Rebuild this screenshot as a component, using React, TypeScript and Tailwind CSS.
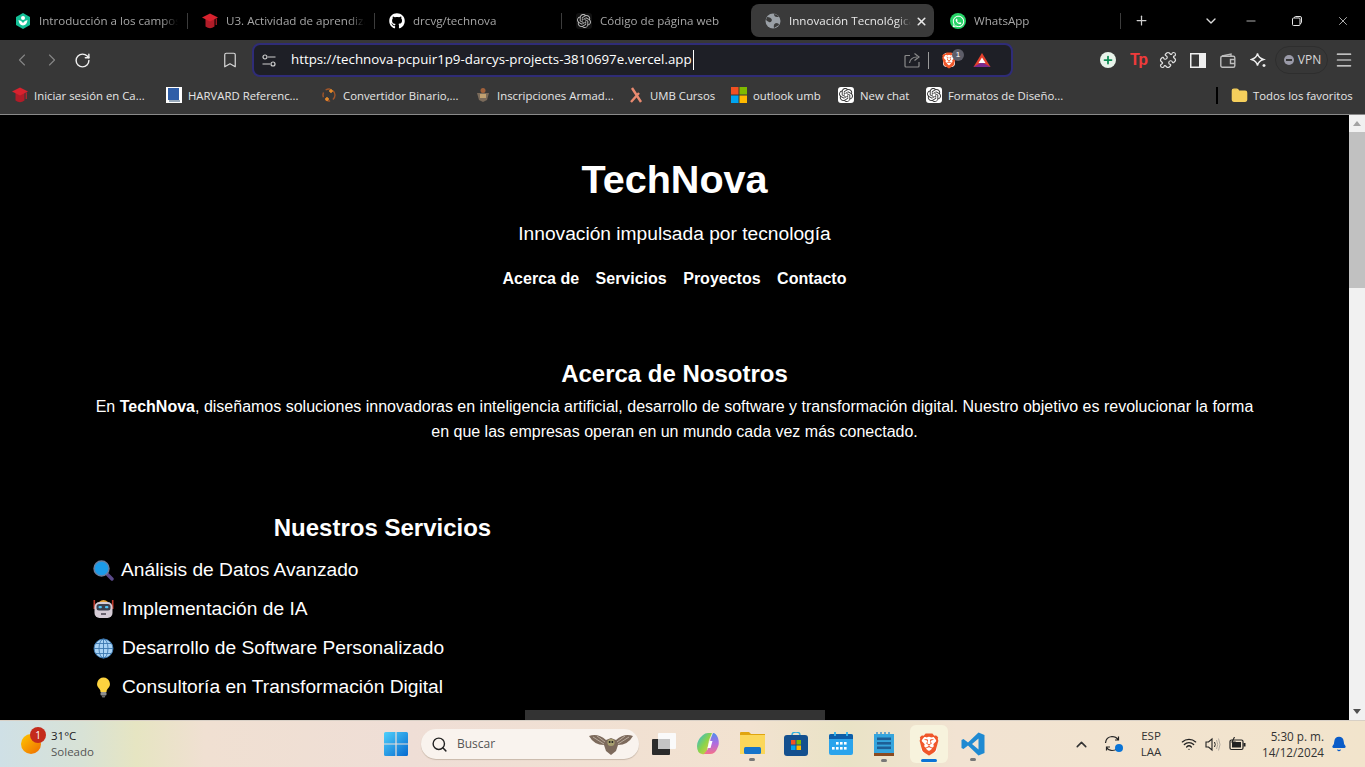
import React from "react";
import { FaGithub, FaWhatsapp } from "react-icons/fa";
import { SiOpenai, SiBrave } from "react-icons/si";
import { ChevronLeft, ChevronRight, RotateCw, Bookmark, X, Plus, ChevronDown, Minus, Puzzle, Search, ChevronUp, Wifi, Bell, Folder, Menu } from "lucide-react";

const Cap = ({ s = 16 }: { s?: number }) => (
  <svg width={s} height={s} viewBox="0 0 16 16"><path d="M3.5 6 H12.5 V13.5 Q8 17 3.5 13.5Z" fill="#b01c28" /><path d="M0 4.5 L8 0.5 L16 4.5 L8 8.5Z" fill="#d8222e" /><path d="M14.2 5.5 V12" stroke="#d8222e" strokeWidth="1" /></svg>
);
const Gpt = ({ box = false }: { box?: boolean }) => (
  <span className={box ? "flex h-4 w-4 items-center justify-center rounded-[3px] bg-white text-[#333]" : "flex h-4 w-4 items-center justify-center rounded-[3px] bg-[#111] text-[#bbb]"}>
    <SiOpenai size={14} />
  </span>
);
const Khan = () => (
  <svg width="16" height="16" viewBox="0 0 16 16"><path d="M8 0 L15 4 V12 L8 16 L1 12 V4Z" fill="#14bf96" /><circle cx="8" cy="5" r="2" fill="#fff" /><path d="M3.5 7 Q4 12 8 12.5 Q12 12 12.5 7 Q9.5 7.5 8 10 Q6.5 7.5 3.5 7Z" fill="#fff" /></svg>
);
const Globe = () => (
  <svg width="16" height="16" viewBox="0 0 16 16"><circle cx="8" cy="8" r="7.5" fill="#9aa0a6" /><path d="M2 4 Q6 4 7 7 Q6 10 4 9 Q2 8 1 7Z M9 15 Q8 11 11 10 Q14 10 14 12Z M9 1 Q9 4 12 4 L14 4 Q12 1 9 1Z" fill="#3b3b3b" /></svg>
);
const BraveMark = ({ w, h }: { w: number; h: number }) => (
  <span className="relative flex items-center justify-center" style={{ width: w, height: h }}>
    <span className="absolute left-[15%] right-[15%] top-[15%] bottom-[15%] rounded-sm bg-white" />
    <SiBrave size={h} color="#f0572a" className="relative" />
  </span>
);
const Tab = ({ icon, label, active, sep = true, w = "w-[187px]" }: { icon: React.ReactNode; label: string; active?: boolean; sep?: boolean; w?: string }) => (
  <div className={`flex h-[33px] shrink-0 items-center pt-[1px] ${w} ${active ? "rounded-lg bg-[#3a3a3a] text-[#e8e8e8]" : "text-[#a6a6a6]"}`}>
    <span className="ml-[14px] mr-2 flex w-4 shrink-0 justify-center">{icon}</span>
    <span className="min-w-0 flex-1 overflow-hidden whitespace-nowrap text-[11.6px] [mask-image:linear-gradient(to_right,black_88%,transparent)]">{label}</span>
    {active && <X size={13} strokeWidth={3} className="ml-1 mr-[6px] shrink-0 text-[#e8e8e8]" />}
    {!active && <span className="ml-[9px] h-4 w-px shrink-0" style={{ background: sep ? "#3c3c3c" : "transparent" }} />}
  </div>
);
const Mark = ({ icon, label, w }: { icon: React.ReactNode; label: string; w: string }) => (
  <div className={`flex shrink-0 items-center gap-[6px] ${w}`}>
    <span className="flex w-4 shrink-0 justify-center">{icon}</span>
    <span className="whitespace-nowrap">{label}</span>
  </div>
);
const Lens = () => (
  <svg width="21" height="21" viewBox="0 0 21 21" className="-mr-px"><path d="M13 13 L19 19" stroke="#5b4a8a" strokeWidth="3.4" strokeLinecap="round" /><circle cx="8.5" cy="8.5" r="7.5" fill="#1c9be8" stroke="#6d7f9e" strokeWidth="1.4" /></svg>
);
const Robot = () => (
  <svg width="21" height="21" viewBox="0 0 21 21"><rect x="0.5" y="1" width="1.6" height="9" fill="#c0392b" /><rect x="18.9" y="1" width="1.6" height="9" fill="#c0392b" /><path d="M6 3 Q10.5 -1 15 3Z" fill="#e3a33a" /><rect x="1.5" y="3" width="18" height="16" rx="5" fill="#d5ccd6" /><rect x="3.5" y="5" width="14" height="6.5" rx="2.5" fill="#3a3f4c" /><rect x="5.5" y="7" width="3.4" height="2.2" rx="1" fill="#4fc3f7" /><rect x="12" y="7" width="3.4" height="2.2" rx="1" fill="#4fc3f7" /><rect x="8" y="14" width="5" height="2" fill="#6a6470" /></svg>
);
const Earth = () => (
  <svg width="21" height="21" viewBox="0 0 21 21" fill="none"><circle cx="10.5" cy="10.5" r="9.5" fill="#a9d3f5" /><g stroke="#3c78b0" strokeWidth="0.9"><circle cx="10.5" cy="10.5" r="9.5" /><ellipse cx="10.5" cy="10.5" rx="4.5" ry="9.5" /><path d="M10.5 1V20M1 10.5H20M2.5 5.5H18.5M2.5 15.5H18.5" /></g></svg>
);
const Bulb = () => (
  <svg width="21" height="21" viewBox="0 0 21 21"><path d="M10.5 0.5 A6.5 6.5 0 0 1 14.5 12 Q13.5 13 13.5 15 H7.5 Q7.5 13 6.5 12 A6.5 6.5 0 0 1 10.5 0.5Z" fill="#fdd33f" /><rect x="7.5" y="15" width="6" height="3.5" rx="1" fill="#8f8f8f" /><rect x="8.8" y="18.5" width="3.4" height="2" rx="1" fill="#6b6b6b" /></svg>
);
const Service = ({ icon, label }: { icon: React.ReactNode; label: string }) => (
  <li className="flex h-[39px] items-center gap-2 last:h-[38px]">{icon}<span>{label}</span></li>
);
const Win = () => (
  <svg width="24" height="24" viewBox="0 0 24 24"><defs><linearGradient id="w" x1="0" y1="0" x2="1" y2="1"><stop offset="0" stopColor="#4fd0fb" /><stop offset="1" stopColor="#0669cf" /></linearGradient></defs><path d="M0 1.5 Q0 0 1.5 0 H11.4 V11.4 H0Z M12.6 0 H22.5 Q24 0 24 1.5 V11.4 H12.6Z M0 12.6 H11.4 V24 H1.5 Q0 24 0 22.5Z M12.6 12.6 H24 V22.5 Q24 24 22.5 24 H12.6Z" fill="url(#w)" /></svg>
);
const Dot = () => <span className="absolute bottom-[-5px] left-[9px] h-[3px] w-[6px] rounded-sm bg-[#777]" />;

export default function App() {
  return (
    <div className="relative flex h-screen w-full flex-col overflow-hidden bg-black font-['Liberation_Sans',sans-serif] text-white">
      {/* tab strip */}
      <div className="flex h-10 shrink-0 items-center bg-black pl-[1px] pt-[1px] font-['Open_Sans',sans-serif] text-[11.7px]">
        <Tab icon={<Khan />} label="Introducción a los campos" />
        <Tab icon={<Cap />} label="U3. Actividad de aprendizaje" />
        <Tab icon={<FaGithub size={16} className="text-white" />} label="drcvg/technova" />
        <Tab icon={<Gpt />} label="Código de página web" sep={false} w="w-[188px] mr-[1px]" />
        <Tab icon={<Globe />} label="Innovación Tecnológica" active w="w-[183px] mr-[2px]" />
        <Tab icon={<span className="flex h-4 w-4 items-center justify-center rounded-full bg-[#25d366] text-white"><FaWhatsapp size={13} /></span>} label="WhatsApp" w="w-[185px]" />
        <Plus size={15} className="ml-[13px] text-[#cfcfcf]" />
        <ChevronDown size={16} className="ml-[54px] text-[#dcdcdc]" />
        <Minus size={14} strokeWidth={1.3} className="ml-[25px] text-[#e5e5e5]" />
        <svg width="10" height="10" viewBox="0 0 10 10" fill="none" stroke="#e5e5e5" className="ml-[34px]"><rect x="0.5" y="2" width="7.5" height="7.5" rx="1" /><path d="M2.5 2 V1.5 Q2.5 0.5 3.5 0.5 H8 Q9.5 0.5 9.5 2 V6.5 Q9.5 7.5 8 7.5" /></svg>
        <X size={14} strokeWidth={1.3} className="ml-[34px] text-[#e5e5e5]" />
      </div>
      {/* toolbar */}
      <div className="flex h-10 shrink-0 items-center bg-[#373737]">
        <ChevronLeft size={20} strokeWidth={1.4} className="ml-3 text-[#858585]" />
        <ChevronRight size={20} strokeWidth={1.4} className="ml-[10px] text-[#858585]" />
        <RotateCw size={17} strokeWidth={2} className="ml-[12px] text-[#f0f0f0]" />
        <Bookmark size={18} strokeWidth={1.6} className="ml-[130px] text-[#d8d8d8]" />
        <div className="ml-[13px] flex h-[34px] w-[761px] shrink-0 items-center rounded-lg border-2 border-[#2f2c78] bg-[#1e1f26] pl-2">
          <svg width="14" height="13" viewBox="0 0 14 13" fill="none" stroke="#d0d0d0" strokeWidth="1.2"><circle cx="3" cy="3" r="2" /><path d="M6 3H13.5M0.5 10H8" /><circle cx="11" cy="10" r="2" /></svg>
          <span className="ml-[15px] whitespace-nowrap border-r border-white pr-px font-['Open_Sans',sans-serif] text-[13.3px] text-white">https://technova-pcpuir1p9-darcys-projects-3810697e.vercel.app</span>
          <div className="ml-auto flex items-center">
            <svg width="17" height="16" viewBox="0 0 17 16" fill="none" stroke="#8a8a8a" strokeWidth="1.2"><path d="M6 3.5H2Q1 3.5 1 4.5V14Q1 15 2 15H14Q15 15 15 14V10" /><path d="M5.5 11Q6.5 5 13 5M10.5 1.5L15 5L10.5 8.5" /></svg>
            <div className="ml-[7px] h-[17px] w-px bg-[#9a9a9a]" />
            <div className="relative ml-[12px]">
              <BraveMark w={16} h={19} />
              <span className="absolute -right-[7px] -top-[2px] flex h-3 w-3 items-center justify-center rounded-full bg-[#5d5d68] text-[8px] text-white">1</span>
            </div>
            <svg width="18" height="16" viewBox="0 0 18 16" className="ml-[16px] mr-[20px]"><path d="M9 1 L17.5 15 H0.5Z" fill="#e5402c" /><path d="M0.5 15 L9 10 L17.5 15Z" fill="#7a2a8e" /><path d="M9 5.5 L12.5 11 H5.5Z" fill="#fff" /></svg>
          </div>
        </div>
        <span className="ml-[87px] flex h-4 w-4 shrink-0 items-center justify-center rounded-full bg-[#e8f3ea]"><Plus size={12} strokeWidth={3.5} className="text-[#0b8a52]" /></span>
        <span className="ml-[14px] w-4 text-[16px] font-bold tracking-[-1.5px] text-[#ef3b3b]">Tp</span>
        <Puzzle size={18} strokeWidth={1.6} className="ml-[13px] shrink-0 text-[#e0e0e0]" />
        <svg width="16" height="15" viewBox="0 0 16 15" className="ml-[13px] shrink-0"><rect x="0.75" y="0.75" width="14.5" height="13.5" fill="none" stroke="#eee" strokeWidth="1.5" /><rect x="9" y="1" width="6.5" height="13" fill="#eee" /></svg>
        <svg width="16" height="15" viewBox="0 0 16 15" fill="none" stroke="#bdbdbd" strokeWidth="1.4" className="ml-[14px] shrink-0"><path d="M2 3L11 1V3.5" /><rect x="0.8" y="3.2" width="14" height="11" rx="1.5" /><path d="M15 6.5H10.5V10.5H15" /></svg>
        <svg width="17" height="17" viewBox="0 0 17 17" fill="none" stroke="#eee" strokeWidth="1.4" className="ml-[14px] shrink-0"><path d="M7.5 1.5 Q8.5 6 13.5 7.5 Q8.5 9 7.5 13.5 Q6.5 9 1.5 7.5 Q6.5 6 7.5 1.5Z" /><path d="M14 12v3M12.5 13.5h3" /></svg>
        <div className="ml-[8px] flex h-[28px] w-[53px] shrink-0 items-center justify-center gap-1 rounded-[14px] border border-[#2e2e2e] pl-[2px] font-['Open_Sans',sans-serif] text-[12px] text-[#d8d8d8]">
          <span className="flex h-[10px] w-[10px] items-center justify-center rounded-full bg-[#9a9aa8]"><span className="h-[2px] w-[6px] bg-[#373737]" /></span>VPN
        </div>
        <Menu size={20} strokeWidth={1.4} className="ml-[6px] shrink-0 text-[#eee]" />
      </div>
      {/* bookmarks */}
      <div className="flex h-[35px] shrink-0 items-center border-b border-[#8a8a8a] bg-[#373737] pl-[12px] pb-[3px] font-['Open_Sans',sans-serif] text-[11.35px] text-[#e6e6e6]">
        <Mark icon={<Cap />} label="Iniciar sesión en Ca..." w="w-[154px]" />
        <Mark icon={<svg width="16" height="16" viewBox="0 0 16 16"><rect width="16" height="16" fill="#fff" /><rect x="2" y="1" width="11" height="12" fill="#2f5ea8" /><rect x="3" y="13" width="11" height="2" fill="#9ab" /></svg>} label="HARVARD Referenc..." w="w-[155px]" />
        <Mark icon={<svg width="16" height="16" viewBox="0 0 16 16" fill="none"><circle cx="8" cy="8" r="6" stroke="#a0562a" strokeWidth="1.4" strokeDasharray="5 3" /><path d="M10 2v4M8 4h4M6 10v4M4 12h4" stroke="#f0902a" strokeWidth="1.4" /></svg>} label="Convertidor Binario,..." w="w-[154px]" />
        <Mark icon={<svg width="16" height="16" viewBox="0 0 16 16"><circle cx="8" cy="3.5" r="2.5" fill="#a0603a" /><path d="M2 6 H14 L12 13 L8 15 L4 13Z" fill="#7a6a5a" /><rect x="5" y="7" width="6" height="4" fill="#c0a070" /></svg>} label="Inscripciones Armad..." w="w-[153px]" />
        <Mark icon={<svg width="16" height="16" viewBox="0 0 16 16" stroke="#e98a70" strokeWidth="2.4" fill="none"><path d="M4 1 L13 15 M11 6 L3 15" /></svg>} label="UMB Cursos" w="w-[103px]" />
        <Mark icon={<svg width="16" height="16" viewBox="0 0 16 16"><rect width="7.5" height="7.5" fill="#f25022" /><rect x="8.5" width="7.5" height="7.5" fill="#7fba00" /><rect y="8.5" width="7.5" height="7.5" fill="#00a4ef" /><rect x="8.5" y="8.5" width="7.5" height="7.5" fill="#ffb900" /></svg>} label="outlook umb" w="w-[107px]" />
        <Mark icon={<Gpt box />} label="New chat" w="w-[88px]" />
        <Mark icon={<Gpt box />} label="Formatos de Diseño..." w="w-[290px]" />
        <div className="mr-[13px] h-[17px] w-[2px] bg-black" />
        <Folder size={17} fill="#f5cf5c" stroke="#f5cf5c" className="mr-[5px]" />
        <span>Todos los favoritos</span>
      </div>
      {/* viewport */}
      <div className="flex min-h-0 flex-1">
        <div className="relative min-w-0 flex-1 overflow-hidden bg-black">
          <header className="pt-[39px] text-center">
            <h1 className="text-[39.6px] font-bold leading-[50px]">TechNova</h1>
            <p className="mt-[18px] text-[19.2px] leading-[24px]">Innovación impulsada por tecnología</p>
            <nav className="mt-[23px] flex justify-center gap-[16.5px] text-[16px] font-bold leading-[20px]">
              <span>Acerca de</span><span>Servicios</span><span>Proyectos</span><span>Contacto</span>
            </nav>
          </header>
          <section className="mt-[70px] px-[93px] text-center">
            <h2 className="text-[24px] font-bold leading-[30px]">Acerca de Nosotros</h2>
            <p className="mt-[5px] text-[16px] leading-[25px]">En <b>TechNova</b>, diseñamos soluciones innovadoras en inteligencia artificial, desarrollo de software y transformación digital. Nuestro objetivo es revolucionar la forma en que las empresas operan en un mundo cada vez más conectado.</p>
          </section>
          <section className="mt-[69px] w-[672px] pl-[93px]">
            <h2 className="text-center text-[24px] font-bold leading-[30px]">Nuestros Servicios</h2>
            <ul className="mt-[8px] text-[19.2px]">
              <Service icon={<Lens />} label="Análisis de Datos Avanzado" />
              <Service icon={<Robot />} label="Implementación de IA" />
              <Service icon={<Earth />} label="Desarrollo de Software Personalizado" />
              <Service icon={<Bulb />} label="Consultoría en Transformación Digital" />
            </ul>
          </section>
          <div className="absolute bottom-0 left-[525px] h-[10px] w-[300px] bg-[#333]" />
        </div>
        <div className="flex w-4 shrink-0 flex-col items-center bg-[#f1f1f1]">
          <div className="mt-[6px] h-0 w-0 border-x-[4px] border-b-[5px] border-x-transparent border-b-[#a3a3a3]" />
          <div className="mt-[6px] h-[156px] w-full bg-[#c1c1c1]" />
          <div className="mt-auto mb-[6px] h-0 w-0 border-x-[4px] border-t-[5px] border-x-transparent border-t-[#505050]" />
        </div>
      </div>
      {/* taskbar */}
      <div className="flex h-[47px] shrink-0 items-center border-t border-[#d8d0c6] bg-[linear-gradient(90deg,#cfe0e6_0%,#d8e2d6_6%,#e6e5c2_10%,#f0e0d2_15%,#efded6_30%,#f2e2d0_55%,#e9e3c6_62%,#f2e3d2_70%,#f2e4cc_100%)] font-['Open_Sans',sans-serif] text-[#333]">
        <div className="relative ml-[21px] h-5 w-5 shrink-0 rounded-full bg-[linear-gradient(135deg,#ffc800,#ee6a00)]">
          <span className="absolute -right-[5px] -top-[7px] flex h-4 w-4 items-center justify-center rounded-full bg-[#c42b1c] text-[10px] text-white">1</span>
        </div>
        <div className="ml-[10px] w-[333px] text-[11.5px] leading-[16px]">
          <div className="text-[#222]">31°C</div>
          <div className="text-[#555]">Soleado</div>
        </div>
        <Win />
        <div className="ml-[13px] flex h-[30px] w-[218px] items-center rounded-[15px] bg-[#f9f3ee] pl-[10px] shadow-[0_1px_1px_#c8b8aa]">
          <Search size={17} strokeWidth={2} className="text-[#222]" />
          <span className="ml-[9px] text-[12px] text-[#555]">Buscar</span>
          <svg width="44" height="22" viewBox="0 0 44 22" className="ml-auto mr-[6px]"><path d="M0 3 Q9 0 17 7 L22 5 L27 7 Q35 0 44 3 Q39 12 29 12 L27 18 L22 22 L17 18 L15 12 Q5 12 0 3Z" fill="#7d6a5c" /><path d="M4 4 L15 11 M8 3 L16 9 M40 4 L29 11 M36 3 L28 9" stroke="#c9bcae" strokeWidth="0.8" /><circle cx="22" cy="9.5" r="3.6" fill="#a8a070" /><circle cx="20.6" cy="9" r="1" fill="#222" /><circle cx="23.4" cy="9" r="1" fill="#222" /></svg>
        </div>
        <svg width="25" height="24" viewBox="0 0 25 24" className="ml-[13px]"><rect x="6" y="1" width="18" height="16" rx="1" fill="#fafafa" /><rect y="7" width="18" height="16" rx="1" fill="#2b2b2b" /><rect x="6" y="7" width="12" height="10" fill="#c4c4c4" /></svg>
        <svg width="24" height="24" viewBox="0 0 24 24" className="ml-[19px]"><defs><linearGradient id="c" x1="0" y1="0" x2="1" y2="1"><stop offset="0" stopColor="#27b5e8" /><stop offset="0.5" stopColor="#8bd44a" /><stop offset="1" stopColor="#f5c542" /></linearGradient><linearGradient id="d" x1="0" y1="0" x2="0" y2="1"><stop offset="0" stopColor="#4f8df0" /><stop offset="0.5" stopColor="#b06be0" /><stop offset="1" stopColor="#f4708a" /></linearGradient></defs><path d="M7 3 Q9 1 12 1 H16 L13 8 L11 19 Q10 23 6 22 Q1 21 1 14 Q1 8 7 3Z" fill="url(#c)" /><path d="M17 1 Q20 1 22 6 Q24 12 21 17 Q19 22 14 22 H8 L12 17 L15 6Z" fill="url(#d)" /><path d="M13.5 9 H16.5 L14.5 16 H11.5Z" fill="#fff" /></svg>
        <div className="relative ml-[20px] h-[24px] w-[25px]">
          <svg width="25" height="22" viewBox="0 0 25 22"><path d="M0 1 Q0 0 1 0 H9 L11 2 H25 V22 H0Z" fill="#e0a510" /><rect y="3" width="25" height="19" fill="#fbd75a" /><rect x="4" y="15" width="17" height="7" rx="1.5" fill="#1673c9" /></svg>
          <Dot />
        </div>
        <svg width="24" height="24" viewBox="0 0 24 24" className="ml-[19px]"><path d="M8 3 Q8 0 12 0 Q16 0 16 3" fill="none" stroke="#2cb0e0" strokeWidth="1.4" /><rect y="3" width="24" height="21" rx="3" fill="#14508e" /><rect x="7" y="8" width="4.5" height="4.5" fill="#f25022" /><rect x="12.5" y="8" width="4.5" height="4.5" fill="#7fba00" /><rect x="7" y="13.5" width="4.5" height="4.5" fill="#00a4ef" /><rect x="12.5" y="13.5" width="4.5" height="4.5" fill="#ffb900" /></svg>
        <svg width="24" height="24" viewBox="0 0 24 24" className="ml-[21px]"><rect y="2" width="24" height="21" rx="2" fill="#2aa4ec" /><path d="M0 7V4Q0 2 2 2H22Q24 2 24 4V7Z" fill="#0d5ea8" /><path d="M6 0v4M18 0v4" stroke="#2fb6f0" strokeWidth="1.8" /><g fill="#fff"><rect x="7" y="10" width="2.6" height="2.6" /><rect x="11" y="10" width="2.6" height="2.6" /><rect x="15" y="10" width="2.6" height="2.6" /><rect x="3" y="15" width="2.6" height="2.6" /><rect x="7" y="15" width="2.6" height="2.6" /><rect x="11" y="15" width="2.6" height="2.6" /><rect x="15" y="15" width="2.6" height="2.6" /></g></svg>
        <div className="relative ml-[21px] h-[24px] w-[20px]">
          <svg width="20" height="24" viewBox="0 0 20 24"><path d="M3 0v4M7 0v4M11 0v4M15 0v4" stroke="#1e7fc8" strokeWidth="1.2" /><rect y="2" width="20" height="19" fill="#35a5dd" /><rect x="3" y="5.5" width="14" height="2.6" fill="#1e5f96" /><rect x="3" y="10" width="14" height="2.6" fill="#1e5f96" /><rect x="3" y="14.5" width="14" height="2.6" fill="#1e5f96" /><rect y="21" width="20" height="3" fill="#8a4b20" /></svg>
          <span className="absolute bottom-[-6px] left-[7px] h-[3px] w-[6px] rounded-sm bg-[#777]" />
        </div>
        <div className="relative ml-[16px] flex h-[38px] w-[38px] items-center justify-center rounded-md bg-[#f7f3dd]">
          <BraveMark w={22} h={25} />
          <span className="absolute bottom-[1px] left-[11px] h-[3px] w-[16px] rounded-sm bg-[#0a74d6]" />
        </div>
        <div className="relative ml-[13px] h-[24px] w-[24px]">
          <svg width="24" height="24" viewBox="0 0 24 24"><path d="M17.5 0.5 L23.5 3 V21 L17.5 23.5 L7 13.5 L2.5 17 L0.5 16 V8 L2.5 7 L7 10.5Z M17.5 6.5 L11 12 L17.5 17.5Z" fill="#1f8ad2" /></svg>
          <Dot />
        </div>
        <ChevronUp size={17} strokeWidth={2.2} className="ml-[88px] text-[#333]" />
        <div className="relative ml-[14px] h-[18px] w-[18px]">
          <svg width="17" height="17" viewBox="0 0 17 17" fill="none" stroke="#222" strokeWidth="1.2"><path d="M1.5 8Q2 2 8 1.5Q12 1.5 14 4.5M14.5 1.5V5H11M15 10Q14 15.5 8 15.5Q4.5 15.5 2.5 12.5M2.5 15.5V12H6" /></svg>
          <span className="absolute bottom-[1px] right-[-1px] h-2 w-2 rounded-full bg-[#0a74d6]" />
        </div>
        <div className="ml-[17px] w-[24px] text-center text-[11.5px] leading-[16px] text-[#333]"><div>ESP</div><div>LAA</div></div>
        <Wifi size={16} strokeWidth={2} className="ml-[18px] text-[#222]" />
        <svg width="16" height="15" viewBox="0 0 16 15" fill="none" className="ml-[8px]"><path d="M1 5H3.5L7 2V13L3.5 10H1Z" stroke="#222" strokeWidth="1.1" /><path d="M9.5 5Q11 7.5 9.5 10" stroke="#222" strokeWidth="1" /><path d="M11.5 3Q14 7.5 11.5 12M13.5 1.5Q16.5 7.5 13.5 13.5" stroke="#aaa49a" strokeWidth="0.9" /></svg>
        <svg width="17" height="14" viewBox="0 0 17 14" fill="none" className="ml-[8px]"><rect x="1" y="3" width="13" height="9.5" rx="1.5" stroke="#222" strokeWidth="1.2" /><rect x="3" y="5" width="9" height="5.5" fill="#222" /><rect x="14.5" y="6" width="2" height="3.5" fill="#222" /><path d="M5.5 0L3 5H6L4.5 8.5" stroke="#222" strokeWidth="1.1" /></svg>
        <div className="ml-[16px] w-[62px] text-right text-[11.7px] leading-[16px] text-[#333]"><div>5:30 p. m.</div><div>14/12/2024</div></div>
        <Bell size={16} fill="#0a5cc8" stroke="#0a5cc8" className="ml-[7px]" />
      </div>
    </div>
  );
}
